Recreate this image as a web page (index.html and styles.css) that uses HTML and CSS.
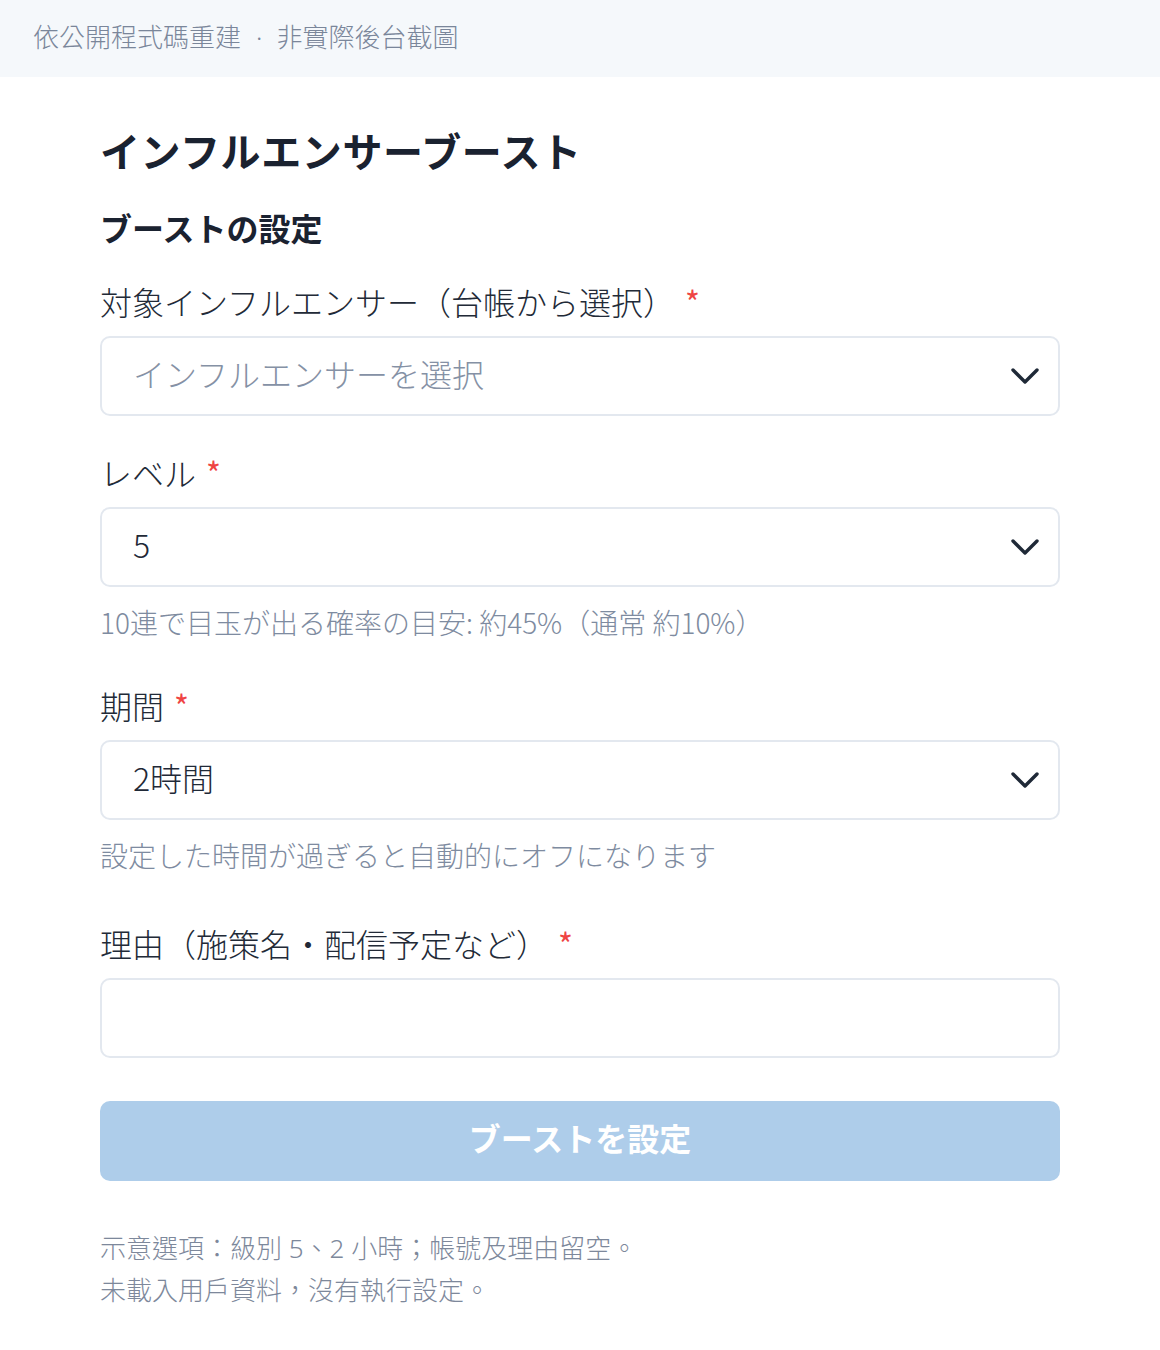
FILE: index.html
```html
<!DOCTYPE html>
<html lang="ja">
<head>
<meta charset="utf-8">
<title>インフルエンサーブースト</title>
<link rel="stylesheet" href="styles.css">
</head>
<body>
<header class="topbar"><span lang="zh-Hant">依公開程式碼重建<span class="sep">·</span>非實際後台截圖</span></header>
<main class="page">
  <h1 class="title">インフルエンサーブースト</h1>
  <h2 class="subtitle">ブーストの設定</h2>

  <div class="field">
    <div class="label">対象インフルエンサー（台帳から選択）<span class="req">*</span></div>
    <div class="select"><span class="placeholder">インフルエンサーを選択</span>
      <svg class="chev" width="28" height="18" viewBox="0 0 28 18"><polyline points="2,3 14,15 26,3" fill="none" stroke="#1f2937" stroke-width="3.4" stroke-linecap="round" stroke-linejoin="round"/></svg>
    </div>
  </div>

  <div class="field field-hint">
    <div class="label">レベル<span class="req">*</span></div>
    <div class="select"><span class="value">5</span>
      <svg class="chev" width="28" height="18" viewBox="0 0 28 18"><polyline points="2,3 14,15 26,3" fill="none" stroke="#1f2937" stroke-width="3.4" stroke-linecap="round" stroke-linejoin="round"/></svg>
    </div>
    <div class="hint">10連で目玉が出る確率の目安: 約45%（通常 約10%）</div>
  </div>

  <div class="field field-wide">
    <div class="label">期間<span class="req">*</span></div>
    <div class="select"><span class="value">2時間</span>
      <svg class="chev" width="28" height="18" viewBox="0 0 28 18"><polyline points="2,3 14,15 26,3" fill="none" stroke="#1f2937" stroke-width="3.4" stroke-linecap="round" stroke-linejoin="round"/></svg>
    </div>
    <div class="hint">設定した時間が過ぎると自動的にオフになります</div>
  </div>

  <div class="field">
    <div class="label">理由（施策名・配信予定など）<span class="req">*</span></div>
    <input class="textbox" type="text">
  </div>

  <button class="submit" type="button">ブーストを設定</button>

  <div class="notes" lang="zh-Hant">
    <p>示意選項：級別 5、2 小時；帳號及理由留空。</p>
    <p>未載入用戶資料，沒有執行設定。</p>
  </div>
</main>
</body>
</html>
```
FILE: styles.css
```css
* { box-sizing: border-box; }
html, body { margin: 0; padding: 0; background: #ffffff; }
body {
  font-family: "Noto Sans CJK JP", "Noto Sans", sans-serif;
  font-weight: 300;
  color: #1f2937;
}
.topbar {
  height: 77px;
  line-height: 74px;
  padding-left: 33px;
  background: #f5f8fb;
  font-family: "Noto Sans", "Noto Sans CJK TC", sans-serif;
  font-size: 26px;
  font-weight: 300;
  color: #7a869a;
}
.sep { margin: 0 14px 0 15px; }
.page {
  width: 960px;
  margin: 0 auto;
  padding-top: 43px;
}
.title {
  margin: 0 0 23px;
  font-size: 40px;
  line-height: 60px;
  font-weight: 700;
  letter-spacing: 0.6px;
  color: #1a2230;
}
.subtitle {
  margin: 0 0 30px;
  font-size: 32px;
  line-height: 48px;
  font-weight: 700;
  color: #1a2230;
}
.field { margin-bottom: 36px; }
.field-hint { margin-bottom: 42px; }
.field-wide { margin-bottom: 47px; }
.label {
  font-size: 32px;
  line-height: 40px;
  margin-bottom: 15px;
  color: #222a37;
}
.req {
  color: #ef4444;
  font-weight: 400;
  margin-left: 10px;
}
.select {
  height: 80px;
  border: 2px solid #e3e8ef;
  border-radius: 10px;
  display: flex;
  align-items: center;
  justify-content: space-between;
  padding: 0 19px 6px 31px;
  font-size: 32px;
}
.placeholder { color: #8591a5; }
.value { color: #1f2937; }
.chev { display: block; margin-top: 6px; }
.hint {
  margin-top: 14px;
  font-size: 28px;
  line-height: 42px;
  color: #7e8ba0;
}
.textbox {
  display: block;
  width: 100%;
  height: 80px;
  border: 2px solid #e3e8ef;
  border-radius: 10px;
  padding: 0 32px;
  font-family: inherit;
  font-size: 32px;
  background: #fff;
  outline: none;
}
.submit {
  display: block;
  width: 100%;
  height: 80px;
  margin-top: 43px;
  padding: 0 0 8px;
  border: none;
  border-radius: 10px;
  background: #aecdea;
  color: #ffffff;
  font-family: inherit;
  font-size: 32px;
  font-weight: 700;
}
.notes {
  margin-top: 46px;
  font-family: "Noto Sans", "Noto Sans CJK TC", sans-serif;
  font-size: 26px;
  line-height: 42px;
  color: #7d889b;
}
.notes p { margin: 0; }
```
